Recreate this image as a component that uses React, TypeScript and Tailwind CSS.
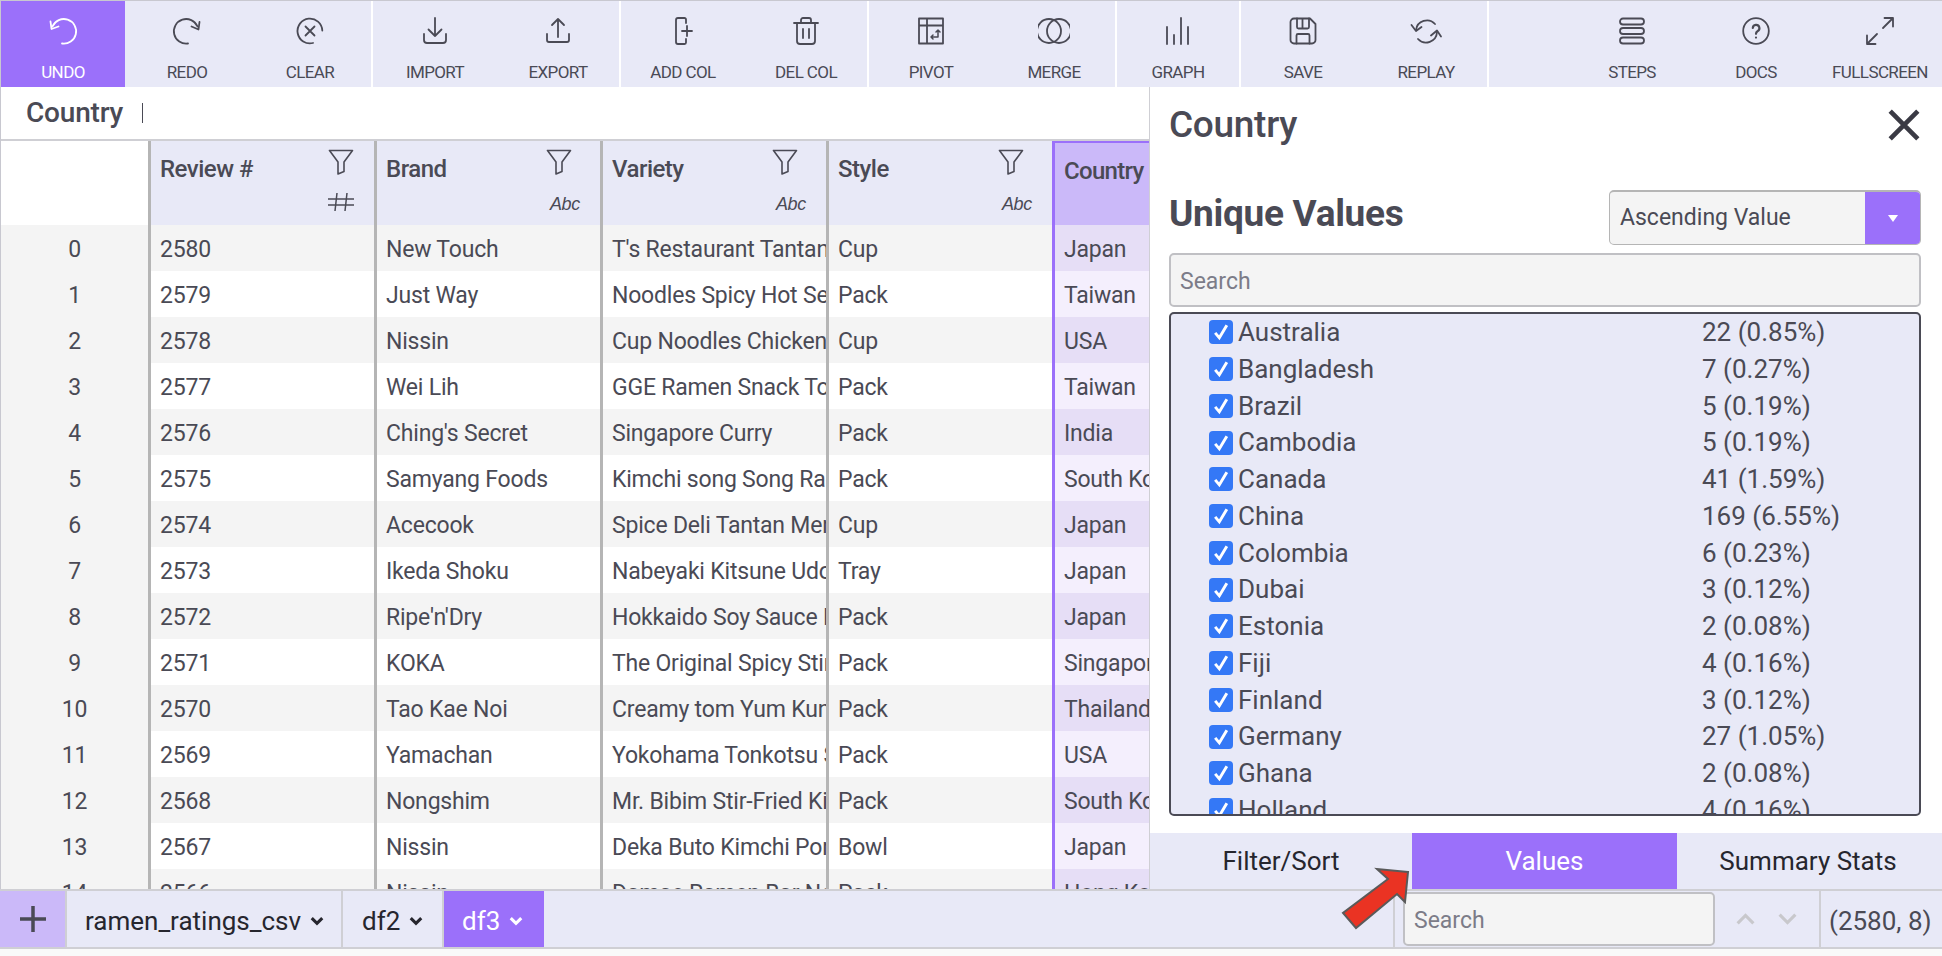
import React from "react";

const ic = "fill-none stroke-current stroke-[1.8] [stroke-linecap:round] [stroke-linejoin:round]";
const Svg = ({ children, cls = "" }: { children: React.ReactNode; cls?: string }) => (
  <svg viewBox="0 0 32 32" className={`w-8 h-8 ${ic} ${cls}`}>{children}</svg>
);

const icons: Record<string, React.ReactNode> = {
  UNDO: <Svg><path d="M15 28.5A12.3 12.3 0 1 0 5.5 11.5" /><path d="M3.5 6.5 4.5 14 11.5 11.5" /></Svg>,
  REDO: <Svg><path d="M17 28.5A12.3 12.3 0 1 1 26.5 11.5" /><path d="M28.5 7 27.5 14.5 20.5 11.5" /></Svg>,
  CLEAR: <Svg><path d="M28.3 15.5A12.4 12.4 0 1 0 19 28" /><path d="M11.5 11.5 20.5 20.5M20.5 11.5 11.5 20.5" /></Svg>,
  IMPORT: <Svg><path d="M16 3V21M9.5 14.5 16 21 22.5 14.5" /><path d="M5 19V25A3 3 0 0 0 8 28H24A3 3 0 0 0 27 25V19" /></Svg>,
  EXPORT: <Svg><path d="M16 22V4M10 10 16 4 22 10" /><path d="M5 19V25A2 2 0 0 0 7 27H25A2 2 0 0 0 27 25V19" /></Svg>,
  "ADD COL": <Svg><path d="M19 8V4.5A1.5 1.5 0 0 0 17.5 3H11A2 2 0 0 0 9 5V27A2 2 0 0 0 11 29H17.5A1.5 1.5 0 0 0 19 27.5V24" /><path d="M20 11V21M15 16H25" /></Svg>,
  "DEL COL": <Svg><path d="M4 8H28M7 8V26A3 3 0 0 0 10 29H22A3 3 0 0 0 25 26V8M11 8V5A2 2 0 0 1 13 3H19A2 2 0 0 1 21 5V8M13 14V23M19 14V23" /></Svg>,
  PIVOT: <Svg><path d="M4 3.5H28V28.5H4ZM4 10.5H28M12 3.5V28.5" /><path d="M16 22H23V15M21 17 23 15 25 17M18 20 16 22 18 24" className="stroke-[1.5]" /></Svg>,
  MERGE: <Svg><circle cx="11" cy="16" r="12" /><circle cx="21" cy="16" r="12" /></Svg>,
  GRAPH: <Svg cls="stroke-[1.5]"><path d="M5 12V29M12 20V29M19 3V29M26 12V29" /></Svg>,
  SAVE: <Svg><path d="M7 3.5H23L28.5 9V25A3.5 3.5 0 0 1 25 28.5H7A3.5 3.5 0 0 1 3.5 25V7A3.5 3.5 0 0 1 7 3.5Z" /><path d="M10 3.5V12A1.5 1.5 0 0 0 11.5 13.5H20.5A1.5 1.5 0 0 0 22 12V3.5M15.5 4V13M9.5 28.5V20.5A1.5 1.5 0 0 1 11 19H21A1.5 1.5 0 0 1 22.5 20.5V28.5" /></Svg>,
  REPLAY: <Svg><path d="M6 15A11 11 0 0 1 25 9" /><path d="M1.5 10 6 16 11.5 12" /><path d="M27 17A11 11 0 0 1 8 24" /><path d="M21 20.5 27 15.5 31 21.5" /></Svg>,
  STEPS: <Svg><rect x="4" y="3.5" width="24" height="6" rx="3" /><rect x="4" y="13" width="24" height="6" rx="3" /><rect x="4" y="22.5" width="24" height="6" rx="3" /></Svg>,
  DOCS: <Svg><circle cx="16" cy="16" r="12.8" /><path d="M12.8 13A3.3 3.3 0 1 1 17.5 16.2C16.3 16.9 16 17.5 16 18.8M16 22.5V22.6" className="stroke-[2.2]" /></Svg>,
  FULLSCREEN: <Svg><path d="M19 13 29 3M20.5 3H29V11.5M13 19 3 29M3 20.5V29H11.5" /></Svg>,
};

const Tool = ({ n, active }: { n: string; active?: boolean }) => (
  <div className={`w-[124px] h-full flex flex-col items-center shrink-0 pt-[14px] ${active ? "bg-[#9b70fa] text-white" : "text-[#4a4a55]"}`}>
    {icons[n]}
    <span className="mt-[15px] text-[17px] leading-5 tracking-[-0.6px] whitespace-nowrap">{n}</span>
  </div>
);

const Group = ({ items, first }: { items: string[]; first?: boolean }) => (
  <div className="flex h-full border-r-2 border-white [&>*:last-child]:w-[122px]">
    {items.map((n) => <Tool key={n} n={n} active={first && n === "UNDO"} />)}
  </div>
);

const Filter = () => (
  <svg viewBox="0 0 26 26" className="w-[26px] h-[26px] fill-none stroke-[#4a4a55] stroke-[1.6] [stroke-linejoin:round]">
    <path d="M1.5 1.5H24.5L16 13V22.5L10 25V13Z" />
  </svg>
);

const rows: string[][] = [
  ["2580", "New Touch", "T's Restaurant Tantan", "Cup", "Japan"],
  ["2579", "Just Way", "Noodles Spicy Hot Sesame", "Pack", "Taiwan"],
  ["2578", "Nissin", "Cup Noodles Chicken Vegetable", "Cup", "USA"],
  ["2577", "Wei Lih", "GGE Ramen Snack Tomato", "Pack", "Taiwan"],
  ["2576", "Ching's Secret", "Singapore Curry", "Pack", "India"],
  ["2575", "Samyang Foods", "Kimchi song Song Ramen", "Pack", "South Korea"],
  ["2574", "Acecook", "Spice Deli Tantan Men", "Cup", "Japan"],
  ["2573", "Ikeda Shoku", "Nabeyaki Kitsune Udon", "Tray", "Japan"],
  ["2572", "Ripe'n'Dry", "Hokkaido Soy Sauce Ramen", "Pack", "Japan"],
  ["2571", "KOKA", "The Original Spicy Stir-Fried", "Pack", "Singapore"],
  ["2570", "Tao Kae Noi", "Creamy tom Yum Kung", "Pack", "Thailand"],
  ["2569", "Yamachan", "Yokohama Tonkotsu Shoyu", "Pack", "USA"],
  ["2568", "Nongshim", "Mr. Bibim Stir-Fried Kimchi", "Pack", "South Korea"],
  ["2567", "Nissin", "Deka Buto Kimchi Pork", "Bowl", "Japan"],
  ["2566", "Nissin", "Damae Ramen Bar Noodle", "Pack", "Hong Kong"],
];

const values: [string, string][] = [
  ["Australia", "22 (0.85%)"], ["Bangladesh", "7 (0.27%)"], ["Brazil", "5 (0.19%)"], ["Cambodia", "5 (0.19%)"],
  ["Canada", "41 (1.59%)"], ["China", "169 (6.55%)"], ["Colombia", "6 (0.23%)"], ["Dubai", "3 (0.12%)"],
  ["Estonia", "2 (0.08%)"], ["Fiji", "4 (0.16%)"], ["Finland", "3 (0.12%)"], ["Germany", "27 (1.05%)"],
  ["Ghana", "2 (0.08%)"], ["Holland", "4 (0.16%)"],
];

const HeadCell = ({ title, kind }: { title: string; kind: string }) => (
  <div className="w-[226px] h-full shrink-0 bg-[#e8e9f7] border-l-[3px] border-[#b5b5b5] pl-[9px] pr-[20px] flex justify-between">
    <span className="mt-[13px] text-[24px] leading-[30px] font-medium tracking-[-0.5px] text-[#4a4a55]">{title}</span>
    <div className="flex flex-col items-end pt-[8px]">
      <div className={kind === "#" ? "mr-0" : "mr-[8px]"}><Filter /></div>
      {kind === "#" ? (
        <svg viewBox="0 0 26 18" className="mt-[18px] w-[26px] h-[18px] fill-none stroke-[#4a4a55] stroke-[1.5]"><path d="M0 6H26M0 12H26M9 0 7 18M19 0 17 18" /></svg>
      ) : (
        <span className="mt-[19px] text-[18px] leading-5 italic font-medium tracking-[-0.3px] text-[#4a4a55] [font-family:'Liberation_Sans',sans-serif]">Abc</span>
      )}
    </div>
  </div>
);

const Body = ({ t, cls = "" }: { t: string; cls?: string }) => (
  <div className={`w-[226px] h-full shrink-0 border-l-[3px] border-[#b5b5b5] pl-[9px] overflow-hidden whitespace-nowrap ${cls}`}>{t}</div>
);

const Chev = ({ cls = "" }: { cls?: string }) => (
  <svg viewBox="0 0 12 8" className={`w-[14px] h-[10px] fill-none stroke-current stroke-[2.6] ${cls}`}><path d="M1.5 1.5 6 6 10.5 1.5" /></svg>
);

export default function App() {
  return (
    <div className="w-[1942px] h-[956px] overflow-hidden bg-[#f9f9f9] flex flex-col [font-family:Roboto,sans-serif] text-[#4a4a55]">
      <div className="h-[87px] shrink-0 flex bg-[#e8e9f7] border-t border-l border-[#c8c8d0]">
        <Group first items={["UNDO", "REDO", "CLEAR"]} />
        <Group items={["IMPORT", "EXPORT"]} />
        <Group items={["ADD COL", "DEL COL"]} />
        <Group items={["PIVOT", "MERGE"]} />
        <Group items={["GRAPH"]} />
        <Group items={["SAVE", "REPLAY"]} />
        <div className="flex-1 flex justify-end h-full">
          <Tool n="STEPS" />
          <Tool n="DOCS" />
          <Tool n="FULLSCREEN" />
        </div>
      </div>

      <div className="h-[802px] shrink-0 flex bg-white">
        <div className="w-[1149px] shrink-0 flex flex-col overflow-hidden border-l border-[#c8c8d0]">
          <div className="h-[54px] shrink-0 flex items-center border-b-2 border-[#cfcfd4] pl-[25px] bg-white">
            <span className="text-[28px] font-medium tracking-[-0.2px]">Country</span>
            <div className="ml-[19px] w-px h-[20px] bg-[#4a4a55]" />
          </div>
          <div className="h-[84px] shrink-0 flex">
            <div className="w-[147px] shrink-0 bg-white" />
            <HeadCell title="Review #" kind="#" />
            <HeadCell title="Brand" kind="Abc" />
            <HeadCell title="Variety" kind="Abc" />
            <HeadCell title="Style" kind="Abc" />
            <div className="flex-1 bg-[#cbb9f9] border-l-[3px] border-t-[2px] border-[#9b70fa] pl-[9px] pt-[13px] text-[24px] leading-[30px] font-medium tracking-[-0.7px] overflow-hidden whitespace-nowrap">Country</div>
          </div>
          <div className="flex-1 overflow-hidden text-[23px] leading-[50px] tracking-[-0.2px]">
            {rows.map((r, i) => {
              const odd = i % 2 === 1;
              return (
                <div key={i} className={`h-[46px] overflow-hidden flex ${odd ? "bg-white" : "bg-[#f4f4f4]"}`}>
                  <div className="w-[147px] shrink-0 text-center bg-[#f4f4f4]">{i}</div>
                  <Body t={r[0]} />
                  <Body t={r[1]} />
                  <Body t={r[2]} />
                  <Body t={r[3]} />
                  <div className={`flex-1 min-w-0 border-l-[3px] border-[#9b70fa] pl-[9px] overflow-hidden whitespace-nowrap ${odd ? "bg-[#f4effd]" : "bg-[#e6def6]"}`}>{r[4]}</div>
                </div>
              );
            })}
          </div>
        </div>

        <div className="flex-1 flex flex-col border-l border-[#cfcfd4] bg-white">
          <div className="flex-1 min-h-0 flex flex-col pl-[19px] pr-[21px]">
            <div className="h-[64px] shrink-0 pt-[11px] flex justify-between items-center">
              <span className="text-[37px] font-medium tracking-[-0.3px]">Country</span>
              <svg viewBox="0 0 32 32" className="w-[34px] h-[34px] fill-none stroke-[#3a3a44] stroke-[4.4]"><path d="M3 3 29 29M29 3 3 29" /></svg>
            </div>
            <div className="mt-[39px] h-[55px] shrink-0 flex justify-between items-center">
              <span className="text-[37px] font-bold tracking-[-0.3px] -mt-[7px]">Unique Values</span>
              <div className="w-[312px] h-full flex rounded-[5px] overflow-hidden border border-[#b5b5b5] border-t-2 bg-[#f4f4f4]">
                <span className="flex-1 pl-[10px] leading-[52px] text-[23px]">Ascending Value</span>
                <div className="w-[55px] bg-[#9b70fa] flex items-center justify-center">
                  <div className="w-0 h-0 border-x-[5px] border-x-transparent border-t-[7px] border-t-white" />
                </div>
              </div>
            </div>
            <div className="mt-[8px] h-[54px] shrink-0 rounded-[5px] border-2 border-[#c0c0c4] bg-[#f4f4f4] pl-[9px] leading-[54px] text-[23px] text-[#7c7c88]">Search</div>
            <div className="mt-[5px] h-[504px] shrink-0 rounded-[5px] border-2 border-[#4a4a55] bg-[#e8e9f7] overflow-hidden text-[26px] leading-[36.75px]">
              {values.map(([a, b]) => (
                <div key={a} className="h-[36.75px] flex items-center">
                  <div className="ml-[38px] w-[24px] h-[24px] shrink-0 rounded-[4px] bg-[#3478f6] flex items-center justify-center">
                    <svg viewBox="0 0 24 24" className="w-5 h-5 fill-none stroke-white stroke-[3.5]"><path d="M5 13 10 19 19 4" /></svg>
                  </div>
                  <span className="ml-[5px] w-[464px] shrink-0">{a}</span>
                  <span>{b}</span>
                </div>
              ))}
            </div>
          </div>
          <div className="h-[56px] shrink-0 flex bg-[#e8e9f7] text-[26px] text-[#26262e] leading-[56px] text-center">
            <div className="w-[262px]">Filter/Sort</div>
            <div className="w-[265px] bg-[#9b70fa] text-white">Values</div>
            <div className="flex-1 pr-[3px]">Summary Stats</div>
          </div>
        </div>
      </div>

      <div className="relative h-[60px] shrink-0 flex bg-[#e8e9f7] border-y-2 border-[#cfcfd4] text-[26px] leading-[56px]">
        <div className="w-[67px] bg-[#cbb9f9] border-r-2 border-[#cfcfd4] flex items-center justify-center">
          <svg viewBox="0 0 28 28" className="w-7 h-7 stroke-[#4a4a55] stroke-[3.5] fill-none"><path d="M14 1V27M1 14H27" /></svg>
        </div>
        <div className="w-[276px] pl-[18px] border-r-2 border-[#cfcfd4] flex items-center gap-[9px] text-[#26262e]"><span className="mt-[3px]">ramen_ratings_csv</span><Chev cls="mt-[4px]" /></div>
        <div className="w-[101px] pl-[19px] border-r-2 border-[#cfcfd4] flex items-center gap-[9px] text-[#26262e]"><span className="mt-[3px]">df2</span><Chev cls="mt-[4px]" /></div>
        <div className="w-[100px] pl-[18px] bg-[#9b70fa] text-white flex items-center gap-[9px]"><span className="mt-[3px]">df3</span><Chev cls="mt-[4px]" /></div>
        <div className="flex-1" />
        <div className="w-[549px] shrink-0 border-l-2 border-[#cfcfd4] flex items-center pl-[8px]">
          <div className="w-[312px] h-[54px] rounded-[5px] border-2 border-[#c0c0c4] bg-[#f4f4f4] pl-[9px] leading-[54px] text-[23px] text-[#7c7c88]">Search</div>
          <Chev cls="ml-[19px] !w-[23px] !h-[14px] rotate-180 text-[#c8c8cc] !stroke-[1.8]" />
          <Chev cls="ml-[19px] !w-[23px] !h-[14px] text-[#c8c8cc] !stroke-[1.8]" />
          <div className="ml-[20px] pl-[8px] h-full border-l-2 border-[#cfcfd4] whitespace-nowrap"><span className="relative top-[2px]">(2580, 8)</span></div>
        </div>
        <svg viewBox="0 0 80 70" className="absolute left-[1335px] top-[-27px] w-[80px] h-[70px]">
          <path d="M73 8 42 5 53 15 8 49 21 64 62 30 70 38Z" fill="#ea3323" stroke="#5a5a5a" strokeWidth="2" />
        </svg>
      </div>
    </div>
  );
}
